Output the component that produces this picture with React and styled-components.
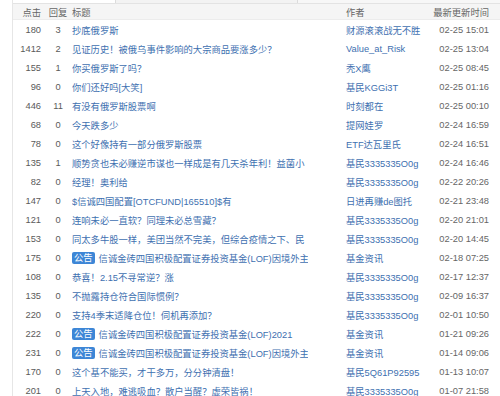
import styled, { createGlobalStyle } from "styled-components";

const posts = [
  { click: 180, reply: 3, title: "抄底俄罗斯", author: "财源滚滚战无不胜", time: "02-25 15:01" },
  { click: 1412, reply: 2, title: "见证历史！被俄乌事件影响的大宗商品要涨多少？", author: "Value_at_Risk", time: "02-25 13:04" },
  { click: 155, reply: 1, title: "你买俄罗斯了吗？", author: "秃X鹰", time: "02-25 08:45" },
  { click: 96, reply: 0, title: "你们还好吗[大笑]", author: "基民KGGi3T", time: "02-25 01:16" },
  { click: 446, reply: 11, title: "有没有俄罗斯股票啊", author: "时刻都在", time: "02-25 00:10" },
  { click: 68, reply: 0, title: "今天跌多少", author: "提网娃罗", time: "02-24 16:59" },
  { click: 78, reply: 0, title: "这个好像持有一部分俄罗斯股票", author: "ETF达瓦里氏", time: "02-24 16:51" },
  { click: 135, reply: 1, title: "顺势贪也未必赚逆市谋也一样成是有几天杀年利！益菌小", author: "基民3335335O0g", time: "02-24 16:46" },
  { click: 82, reply: 0, title: "经理！奥利给", author: "基民3335335O0g", time: "02-22 20:26" },
  { click: 147, reply: 0, title: "$信诚四国配置[OTCFUND|165510]$有", author: "日进再赚de图托", time: "02-21 23:48" },
  { click: 121, reply: 0, title: "连响未必一直软？同理未必总雪藏？", author: "基民3335335O0g", time: "02-20 21:01" },
  { click: 153, reply: 0, title: "同太多牛股一样，美团当然不完美，但综合疫情之下、民", author: "基民3335335O0g", time: "02-20 14:45" },
  { click: 175, reply: 0, notice: true, title: "信诚金砖四国积极配置证券投资基金(LOF)因境外主", author: "基金资讯", time: "02-18 07:25" },
  { click: 108, reply: 0, title: "恭喜！2.15不寻常逆？涨", author: "基民3335335O0g", time: "02-17 12:37" },
  { click: 135, reply: 0, title: "不抛露持仓符合国际惯例？", author: "基民3335335O0g", time: "02-09 16:37" },
  { click: 220, reply: 0, title: "支持4季末适降仓位！伺机再添加？", author: "基民3335335O0g", time: "02-01 10:50" },
  { click: 222, reply: 0, notice: true, title: "信诚金砖四国积极配置证券投资基金(LOF)2021", author: "基金资讯", time: "01-21 09:26" },
  { click: 231, reply: 0, notice: true, title: "信诚金砖四国积极配置证券投资基金(LOF)因境外主", author: "基金资讯", time: "01-14 09:06" },
  { click: 170, reply: 0, title: "这个基不能买，才干多万，分分钟清盘！", author: "基民5Q61P92595", time: "01-13 10:07" },
  { click: 201, reply: 0, title: "上天入地，难逃吸血？散户当醒？虚荣皆祸！", author: "基民3335335O0g", time: "01-07 21:58" },
];

export default function App() {
  return (
    <>
      <GlobalStyle />
      <StyledPage>
        <StyledTabs>
          <StyledTab $active />
          <StyledTab />
          <StyledTabFill />
        </StyledTabs>
        <StyledHeader>
          <StyledClick>点击</StyledClick>
          <StyledReply>回复</StyledReply>
          <StyledTitleCell>标题</StyledTitleCell>
          <StyledAuthorHead>作者</StyledAuthorHead>
          <StyledTime>最新更新时间</StyledTime>
        </StyledHeader>
        {posts.map((post, i) => (
          <StyledRow key={i}>
            <StyledClick>{post.click}</StyledClick>
            <StyledReply>{post.reply}</StyledReply>
            <StyledTitleCell>
              <StyledTitleClip>
                {post.notice && <StyledBadge>公告</StyledBadge>}
                <StyledLink>{post.title}</StyledLink>
              </StyledTitleClip>
            </StyledTitleCell>
            <StyledAuthor>{post.author}</StyledAuthor>
            <StyledTime>{post.time}</StyledTime>
          </StyledRow>
        ))}
      </StyledPage>
    </>
  );
}

const GlobalStyle = createGlobalStyle`
  body {
    margin: 0;
    background: #ffffff;
    font-family: "Liberation Sans", "Noto Sans CJK SC", sans-serif;
  }
`;

const StyledPage = styled.div`
  width: 488px;
  height: 396px;
  margin-left: 12px;
  border-left: 1px solid #e6e6e6;
  overflow: hidden;
  font-size: 9.3px;
  color: #5a5a5a;
`;

const StyledTabs = styled.div`
  display: flex;
  height: 3px;
  border-bottom: 1px solid #e3e3e3;
`;

const StyledTab = styled.div`
  width: ${(p) => (p.$active ? "102px" : "181px")};
  border-right: 1px solid #dcdcdc;
  background: ${(p) => (p.$active ? "#ffffff" : "#f3f3f3")};
`;

const StyledTabFill = styled.div`
  flex: 1;
  background: #f7f7f7;
`;

const StyledRowBase = styled.div`
  display: grid;
  grid-template-columns: 33px 24px 272px 1fr auto;
  align-items: center;
  padding-right: 12px;
  white-space: nowrap;
`;

const StyledHeader = styled(StyledRowBase)`
  height: 15px;
  background: #f5f5f5;
  border-bottom: 1px solid #ececec;
  color: #666;
`;

const StyledRow = styled(StyledRowBase)`
  height: 19px;
`;

const StyledClick = styled.div`
  text-align: right;
  padding-right: 5px;
`;

const StyledReply = styled.div`
  text-align: center;
`;

const StyledTitleCell = styled.div`
  padding-left: 2px;
`;

const StyledTitleClip = styled.div`
  display: flex;
  align-items: center;
  max-width: 236px;
  overflow: hidden;
`;

const StyledBadge = styled.span`
  flex: none;
  display: inline-block;
  height: 12px;
  line-height: 12px;
  padding: 0 2px;
  margin-right: 4px;
  border-radius: 2px;
  background: #3d86d6;
  color: #ffffff;
`;

const StyledLink = styled.span`
  color: #4070b0;
`;

const StyledAuthorHead = styled.div`
  padding-left: 4px;
`;

const StyledAuthor = styled.div`
  padding-left: 4px;
  color: #4070b0;
`;

const StyledTime = styled.div`
  text-align: right;
  color: #666;
`;
